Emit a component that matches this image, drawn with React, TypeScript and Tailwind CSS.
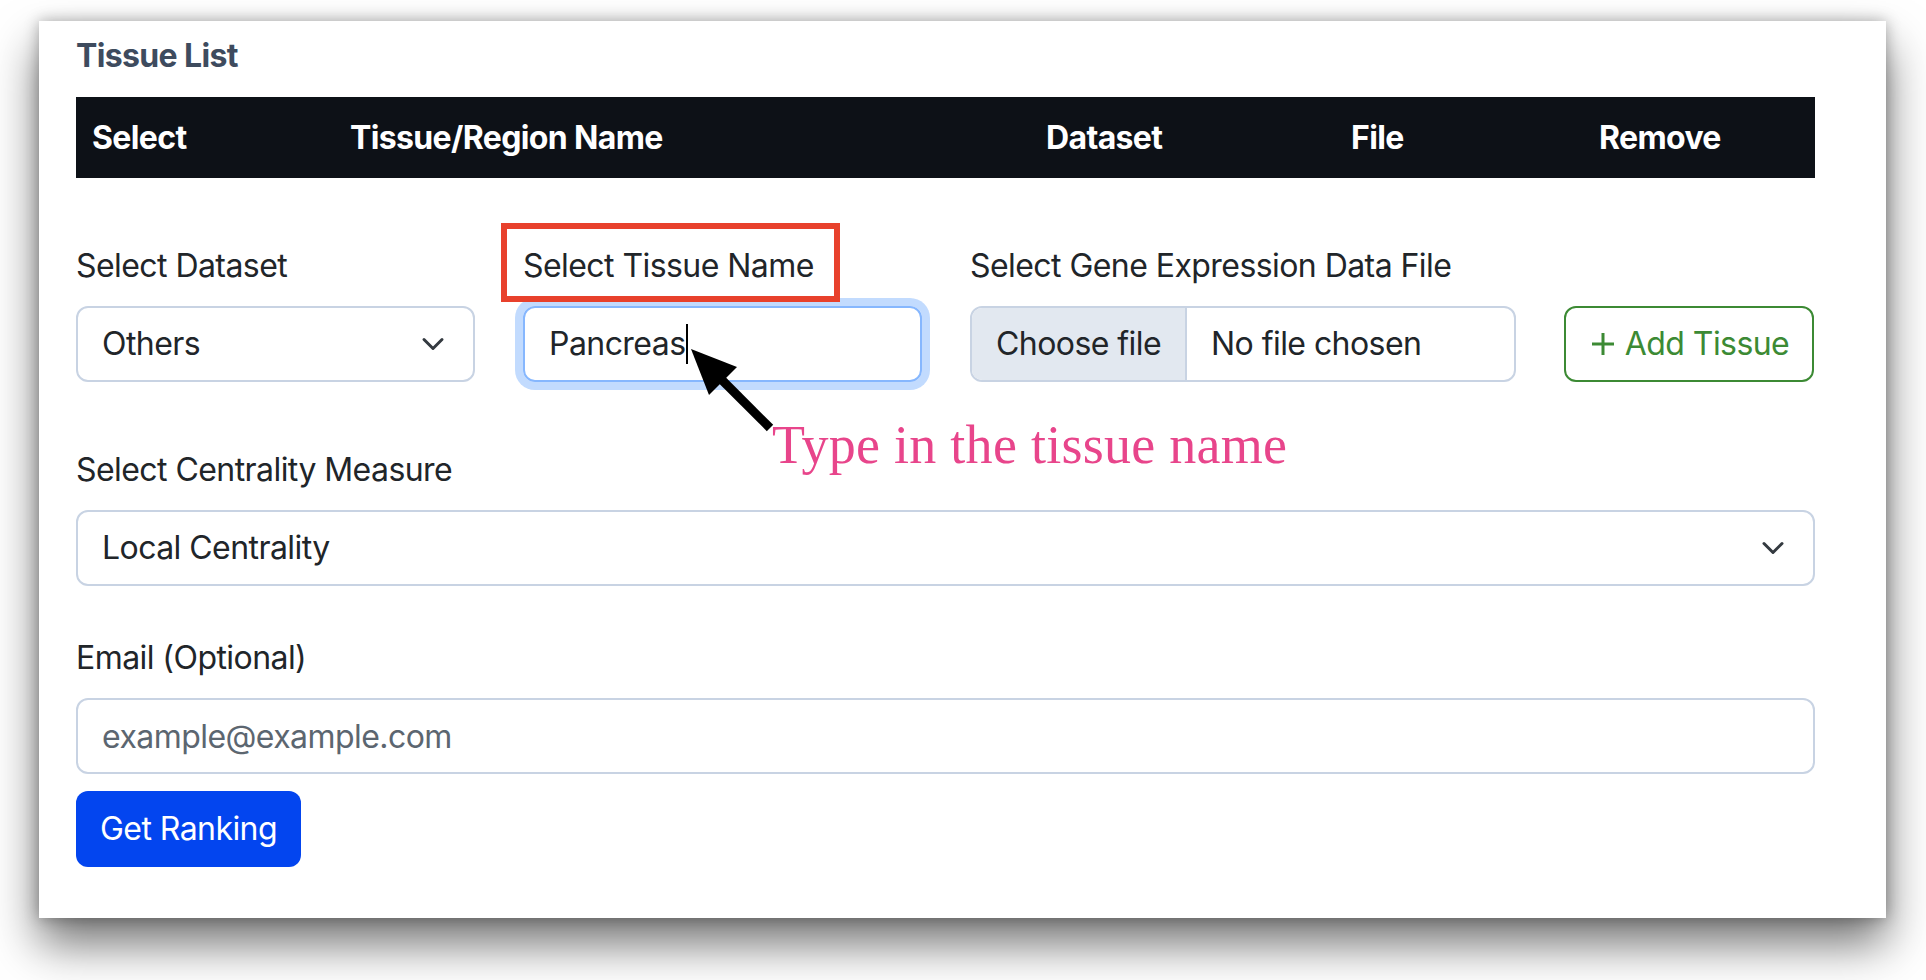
const font = { fontFamily: "Inter, 'Liberation Sans', sans-serif", letterSpacing: "-0.035em" };
const bold = { letterSpacing: "-0.02em" };

const Chevron = () => (
  <svg width="32" height="24" viewBox="0 0 16 16" fill="none">
    <path d="m2 5 6 6 6-6" stroke="#343a40" strokeWidth="2" strokeLinecap="round" strokeLinejoin="round" />
  </svg>
);

const App = () => {
  return (
    <div className="min-h-[980px] bg-white pt-[21px] pl-[39px] text-[#212529]" style={font}>
      <div className="relative w-[1847px] h-[897px] bg-white pl-[37px] pr-[71px] pt-[11px] shadow-[0_26px_44px_rgba(0,0,0,0.55),0_0_14px_rgba(0,0,0,0.3)]">
        {/* heading */}
        <h5 className="text-[32px] leading-[48px] font-bold text-[#3e4b5e]" style={bold}>Tissue List</h5>

        {/* table header */}
        <div
          className="mt-[17px] grid grid-cols-[258px_696px_305px_248px_232px] h-[81px] items-center bg-[#0d1117] text-white text-[32px] font-bold"
          style={bold}
        >
          <div className="px-[16px]">Select</div>
          <div className="px-[16px]">Tissue/Region Name</div>
          <div className="px-[16px]">Dataset</div>
          <div className="px-[16px]">File</div>
          <div className="px-[16px]">Remove</div>
        </div>

        {/* add tissue row */}
        <div className="mt-[64px] grid grid-cols-[399px_399px_546px_250px] gap-x-[48px] text-[32px] leading-[48px]">
          <div>
            <label className="block mb-[16px]">Select Dataset</label>
            <div className="flex h-[76px] items-center justify-between rounded-[12px] border-2 border-[#c8d3e3] pl-[24px] pr-[24px]">
              <span>Others</span>
              <Chevron />
            </div>
          </div>
          <div>
            <label className="block mb-[16px]">Select Tissue Name</label>
            <div className="flex h-[76px] items-center rounded-[12px] border-2 border-[#86b7fe] px-[24px] shadow-[0_0_0_8px_rgba(13,110,253,0.25)]">
              <span>Pancreas</span>
              <span className="ml-[1px] inline-block h-[40px] w-[2px] bg-black" />
            </div>
          </div>
          <div>
            <label className="block mb-[16px]">Select Gene Expression Data File</label>
            <div className="flex h-[76px] items-stretch overflow-hidden rounded-[12px] border-2 border-[#c8d3e3]">
              <div className="flex items-center bg-[#e2e8f0] px-[24px] border-r-2 border-[#c8d3e3]">Choose file</div>
              <div className="flex items-center px-[24px]">No file chosen</div>
            </div>
          </div>
          <div className="flex items-end">
            <button className="flex h-[76px] w-full items-center justify-center gap-[8px] rounded-[12px] border-2 border-[#3c8a34] text-[#3c8a34]">
              <svg width="28" height="28" viewBox="0 0 28 28" fill="none">
                <path d="M14 3v22M3 14h22" stroke="#3c8a34" strokeWidth="3" />
              </svg>
              <span>Add Tissue</span>
            </button>
          </div>
        </div>

        {/* centrality */}
        <div className="mt-[64px] text-[32px] leading-[48px]">
          <label className="block mb-[16px]">Select Centrality Measure</label>
          <div className="flex h-[76px] items-center justify-between rounded-[12px] border-2 border-[#c8d3e3] pl-[24px] pr-[24px]">
            <span>Local Centrality</span>
            <Chevron />
          </div>
        </div>

        {/* email */}
        <div className="mt-[48px] text-[32px] leading-[48px]">
          <label className="block mb-[16px]">Email (Optional)</label>
          <input
            type="email"
            placeholder="example@example.com"
            className="block h-[76px] w-full rounded-[12px] border-2 border-[#c8d3e3] px-[24px] placeholder:text-[#5c6670] outline-none"
          />
        </div>

        <button className="mt-[17px] h-[76px] rounded-[12px] bg-[#0345ef] px-[24px] text-[32px] leading-[48px] text-white">
          Get Ranking
        </button>

        {/* annotation overlays */}
        <div className="pointer-events-none absolute left-[462px] top-[202px] h-[79px] w-[339px] border-[6px] border-[#e8412c]" />
        <svg className="pointer-events-none absolute left-[641px] top-[319px]" width="100" height="100" viewBox="0 0 100 100">
          <line x1="40" y1="38" x2="90" y2="88" stroke="#000" strokeWidth="9" />
          <polygon points="11,9 29,55 57,27" fill="#000" />
        </svg>
        <div
          className="pointer-events-none absolute left-[733px] top-[394px] text-[54px] leading-[60px] text-[#e8458b] whitespace-nowrap"
          style={{ fontFamily: "'Liberation Serif', 'DejaVu Serif', serif", letterSpacing: "0.005em" }}
        >
          Type in the tissue name
        </div>
      </div>
    </div>
  );
};

export default App;
